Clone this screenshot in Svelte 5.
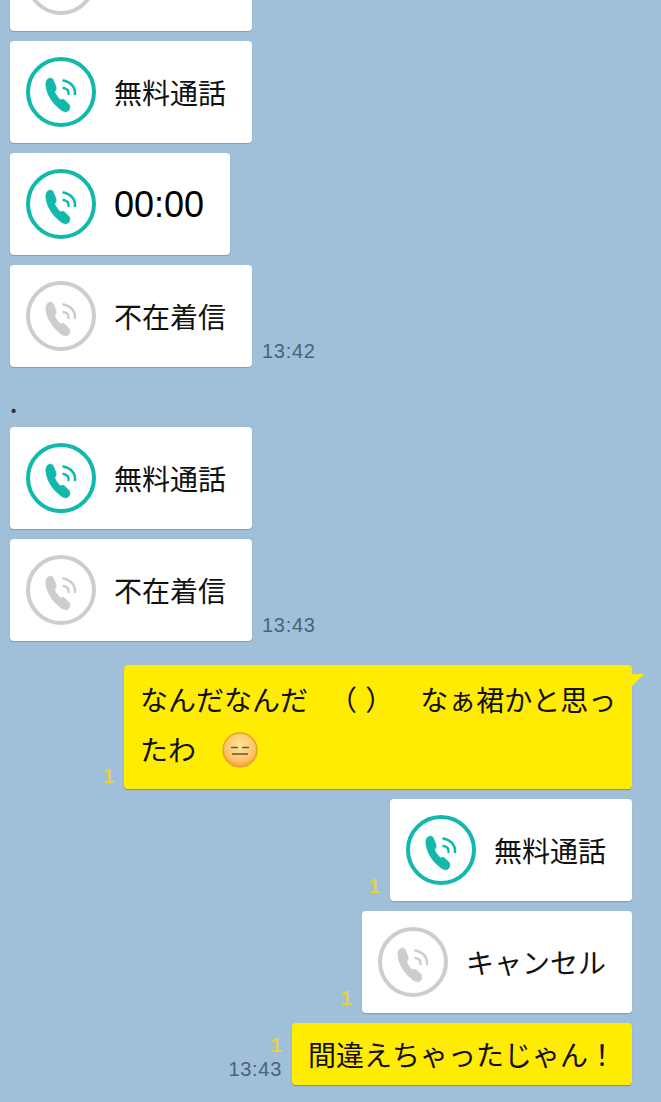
<script lang="ts">
  type Row = {
    side: 'in' | 'out'
    kind: 'call' | 'text' | 'dot'
    label?: string
    missed?: boolean
    time?: string
    read?: boolean
    big?: boolean
    tail?: boolean
    gap?: boolean
  }

  const rows: Row[] = [
    { side: 'in', kind: 'call', missed: true },
    { side: 'in', kind: 'call', label: '無料通話' },
    { side: 'in', kind: 'call', label: '00:00', big: true },
    { side: 'in', kind: 'call', label: '不在着信', missed: true, time: '13:42' },
    { side: 'in', kind: 'dot' },
    { side: 'in', kind: 'call', label: '無料通話' },
    { side: 'in', kind: 'call', label: '不在着信', missed: true, time: '13:43' },
    { side: 'out', kind: 'text', tail: true, read: true, gap: true },
    { side: 'out', kind: 'call', label: '無料通話', read: true },
    { side: 'out', kind: 'call', label: 'キャンセル', missed: true, read: true },
    { side: 'out', kind: 'text', label: '間違えちゃったじゃん！', read: true, time: '13:43' }
  ]
</script>

{#snippet phone()}
  <svg class="phone" viewBox="0 0 70 70" width="70" height="70">
    <circle cx="35" cy="35" r="33" fill="none" stroke="currentColor" stroke-width="4" />
    <path
      fill="currentColor"
      stroke="currentColor"
      stroke-width="0.8"
      stroke-linejoin="round"
      d="M23 21.500C20.500 22.500 19.500 25 20 29C21 37 26 46 34 52C37 54.500 40 55.500 42 54C44 52.500 44.500 49.500 43 47.500L39 43.500C37.500 42 36 42 34.500 43C32.500 41.500 30 38 28.500 35C30 33 30.500 31.500 29.800 29.500L27.500 23.500C26.500 21 25 20.800 23 21.500Z"
    />
    <path fill="none" stroke="currentColor" stroke-width="2.6" stroke-linecap="round" d="M37.500 23.500C44.500 25 49.500 30 49 37" />
    <path fill="none" stroke="currentColor" stroke-width="2.4" stroke-linecap="round" d="M37.500 31C40.500 31.500 43 33.500 42.500 37" />
  </svg>
{/snippet}

<main class="chat">
  {#each rows as row}
    {#if row.kind === 'dot'}
      <div class="dot">.</div>
    {:else}
      <div class="row {row.side}" class:gap={row.gap}>
        {#if row.side === 'out'}
          <div class="meta">
            {#if row.read}<span class="read">1</span>{/if}
            {#if row.time}<span class="time">{row.time}</span>{/if}
          </div>
        {/if}
        {#if row.kind === 'call'}
          <div class="card" class:missed={row.missed} class:big={row.big}>
            {@render phone()}
            {#if row.label}<span class="label">{row.label}</span>{/if}
          </div>
        {:else if row.tail}
          <div class="bubble long">
            <div class="line">なんだなんだ<span class="sp1">（ ）</span>なぁ裙かと思っ</div>
            <div class="line">たわ<span class="emoji">
              <svg viewBox="0 0 36 36" width="36" height="36">
                <defs>
                  <radialGradient id="face" cx="50%" cy="38%" r="62%">
                    <stop offset="0%" stop-color="#ffe39a" />
                    <stop offset="70%" stop-color="#fcc56a" />
                    <stop offset="100%" stop-color="#f2a031" />
                  </radialGradient>
                </defs>
                <circle cx="18" cy="18" r="17" fill="url(#face)" stroke="#e9a12f" stroke-width="1.400" />
                <path d="M9 15.500h7M20 15.500h7M10 22h16" stroke="#6b5635" stroke-width="1.500" fill="none" />
              </svg>
            </span></div>
            <svg class="tail" width="12" height="12" viewBox="0 0 12 12"><path d="M0 0h12L0 12z" fill="#ffec00" /></svg>
          </div>
        {:else}
          <div class="bubble">{row.label}</div>
        {/if}
        {#if row.side === 'in' && row.time}
          <span class="time">{row.time}</span>
        {/if}
      </div>
    {/if}
  {/each}
</main>

<style>
  :global(body) {
    margin: 0;
    background: #a0bfd8;
  }
  .chat {
    height: 1102px;
    overflow: hidden;
    display: flex;
    flex-direction: column;
    gap: 10px;
    padding: 0 29px 0 10px;
    box-sizing: border-box;
    font-family: 'Noto Sans CJK JP', sans-serif;
    color: #111;
  }
  .row {
    display: flex;
    align-items: flex-end;
    flex: none;
  }
  .row:first-child {
    margin-top: -71px;
  }
  .row.out {
    justify-content: flex-end;
  }
  .row.gap {
    margin-top: 14px;
  }
  .row.gap .meta {
    margin-bottom: 3px;
  }
  .card {
    display: flex;
    align-items: center;
    gap: 18px;
    height: 102px;
    padding: 0 26px 0 16px;
    background: #fff;
    border-radius: 4px;
    box-shadow: 0 1px 1px rgba(60, 90, 120, 0.35);
    color: #12b8ac;
  }
  .card.missed {
    color: #cdcdcd;
  }
  .card.missed:not(:has(.label)) {
    width: 242px;
    box-sizing: border-box;
  }
  .phone {
    display: block;
    flex: none;
  }
  .label {
    font-size: 28px;
    line-height: 40px;
    color: #111;
  }
  .card.big .label {
    font-family: 'Liberation Sans', sans-serif;
    font-size: 36px;
    padding-top: 2px;
    color: #000;
  }
  .time {
    font-family: 'Liberation Sans', sans-serif;
    font-size: 20px;
    line-height: 22px;
    letter-spacing: 0.7px;
    color: #4f6272;
  }
  .row.in .time {
    margin-left: 10px;
    margin-bottom: 5px;
  }
  .meta {
    display: flex;
    flex-direction: column;
    align-items: flex-end;
    margin-right: 10px;
    margin-bottom: 5px;
  }
  .read {
    font-family: 'Liberation Sans', sans-serif;
    font-weight: 700;
    font-size: 20px;
    line-height: 20px;
    color: #e6d33c;
  }
  .read:has(+ .time) {
    margin-bottom: 3px;
  }
  .dot {
    flex: none;
    height: 40px;
    padding-top: 12px;
    box-sizing: border-box;
    font-size: 22px;
    line-height: 28px;
    font-weight: 700;
    color: #333;
  }
  .bubble {
    position: relative;
    background: #ffec00;
    border-radius: 4px;
    box-shadow: 0 1px 1px rgba(90, 100, 90, 0.5);
    padding: 11px 16px;
    font-size: 28px;
    line-height: 40px;
    white-space: nowrap;
  }
  .bubble.long {
    width: 508px;
    box-sizing: border-box;
    height: 124px;
    padding: 0 16px;
  }
  .line {
    height: 62px;
    line-height: 68px;
  }
  .line + .line {
    line-height: 44px;
  }
  .sp1 {
    margin: 0 27px 0 21px;
    word-spacing: 2px;
  }
  .emoji {
    display: inline-block;
    margin-left: 26px;
    width: 36px;
    height: 36px;
    vertical-align: -7px;
    line-height: 0;
  }
  .tail {
    position: absolute;
    top: 9px;
    right: -12px;
  }
</style>
